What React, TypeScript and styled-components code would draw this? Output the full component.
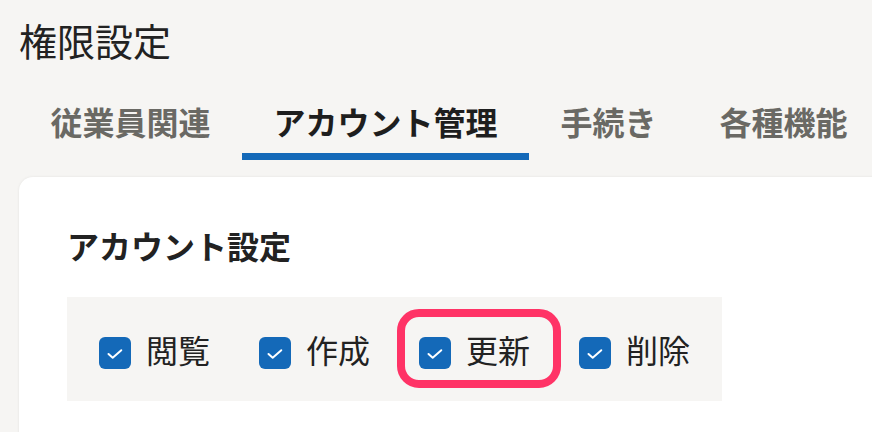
import React from 'react';
import styled, { createGlobalStyle } from 'styled-components';

const GlobalStyle = createGlobalStyle`
  html, body {
    margin: 0;
    padding: 0;
    background: #f6f5f3;
    overflow: hidden;
  }
  body {
    font-family: 'Noto Sans CJK JP', 'Noto Sans', sans-serif;
    color: #222;
  }
`;

const Page = styled.div`
  width: 872px;
  height: 432px;
  padding-left: 19px;
  box-sizing: border-box;
  overflow: hidden;
`;

const Title = styled.h1`
  margin: 0;
  padding-top: 15px;
  font-size: 38px;
  line-height: 50px;
  font-weight: 400;
  color: #222;
`;

const Tabs = styled.div`
  display: flex;
`;

const Tab = styled.div<{ active?: boolean }>`
  padding: 36px 31.5px 12px;
  font-size: 32px;
  line-height: 40px;
  font-weight: 700;
  white-space: nowrap;
  color: ${(p) => (p.active ? '#1e1e1e' : '#6a6964')};
  border-bottom: 7px solid ${(p) => (p.active ? '#1469b8' : 'transparent')};
`;

const Card = styled.div`
  margin-top: 17px;
  width: 900px;
  height: 300px;
  background: #fff;
  border-radius: 14px;
  box-shadow: 0 0 3px rgba(0, 0, 0, 0.08);
  padding: 48px 0 0 48px;
  box-sizing: border-box;
`;

const Heading = styled.h2`
  margin: 0 0 32px;
  font-size: 32px;
  line-height: 40px;
  font-weight: 700;
  color: #222;
`;

const OptionBox = styled.div`
  display: inline-flex;
  align-items: center;
  gap: 49px;
  height: 104px;
  padding: 0 32px;
  background: #f6f5f3;
`;

const Option = styled.label`
  position: relative;
  display: flex;
  align-items: center;
  gap: 15px;
  height: 40px;
`;

const Box = styled.span`
  display: flex;
  width: 32px;
  height: 32px;
  margin-top: 7px;
  border-radius: 6px;
  background: #1469b8;
  flex-shrink: 0;
`;

const Label = styled.span`
  font-size: 32px;
  line-height: 40px;
  font-weight: 400;
  color: #222;
  white-space: nowrap;
`;

const Highlight = styled.span`
  position: absolute;
  left: -22px;
  top: -20px;
  width: 164px;
  height: 79px;
  box-sizing: border-box;
  border: 8px solid #ff3366;
  border-radius: 22px;
  pointer-events: none;
`;

const Check = () => (
  <svg width="32" height="32" viewBox="0 0 32 32">
    <path
      d="M9.5 17 L13.7 20.8 L22.3 13.2"
      fill="none"
      stroke="#fff"
      strokeWidth="2"
      strokeLinecap="round"
      strokeLinejoin="round"
    />
  </svg>
);

const tabs = ['従業員関連', 'アカウント管理', '手続き', '各種機能'];
const options = ['閲覧', '作成', '更新', '削除'];

export default function App() {
  return (
    <>
      <GlobalStyle />
      <Page>
        <Title>権限設定</Title>
        <Tabs>
          {tabs.map((t) => (
            <Tab key={t} active={t === 'アカウント管理'}>
              {t}
            </Tab>
          ))}
        </Tabs>
        <Card>
          <Heading>アカウント設定</Heading>
          <OptionBox>
            {options.map((o) => (
              <Option key={o}>
                <Box>
                  <Check />
                </Box>
                <Label>{o}</Label>
                {o === '更新' && <Highlight />}
              </Option>
            ))}
          </OptionBox>
        </Card>
      </Page>
    </>
  );
}
